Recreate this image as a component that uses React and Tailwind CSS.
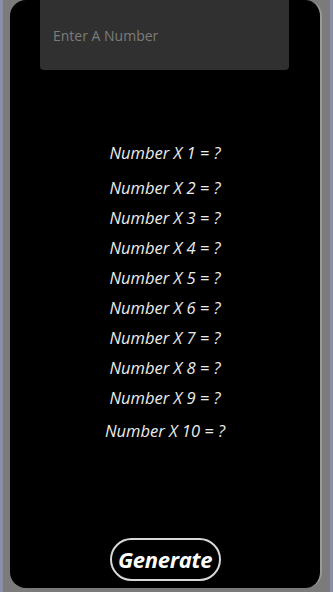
export default function App() {
  const lines = [1, 2, 3, 4, 5, 6, 7, 8, 9, 10];
  return (
    <div className="w-[333px] h-[592px] bg-[#8a8fa8] px-[3px] overflow-hidden" style={{ fontFamily: '"Open Sans", "Noto Sans", sans-serif' }}>
      <div className="h-full bg-[#7b7b7b] pl-[7px] pr-[8px]">
        <div className="h-[588px] bg-black rounded-[16px] border-r-[2px] border-[#9a9a9a] flex flex-col items-center">
          <div className="w-[249px] h-[70px] bg-[#303030] rounded-b-[4px] flex items-center pl-[13px] mr-[1px] shrink-0">
            <span className="text-[14px] text-[#7c7c7c]">Enter A Number</span>
          </div>
          <div className="mt-[68px] flex flex-col items-center">
            {lines.map((n) => (
              <div
                key={n}
                className={
                  "italic text-[16.5px] leading-[30px] text-[#ececec] " +
                  (n === 2 ? "mt-[5px]" : n === 10 ? "mt-[3px]" : "")
                }
              >
                Number X {n} = ?
              </div>
            ))}
          </div>
          <div className="flex-1" />
          <button className="mb-[7px] w-[111px] h-[43px] rounded-full border-[2px] border-[#d8d8d8] text-white italic font-bold text-[22px] tracking-[-0.3px] flex items-center justify-center">
            Generate
          </button>
        </div>
      </div>
    </div>
  );
}
